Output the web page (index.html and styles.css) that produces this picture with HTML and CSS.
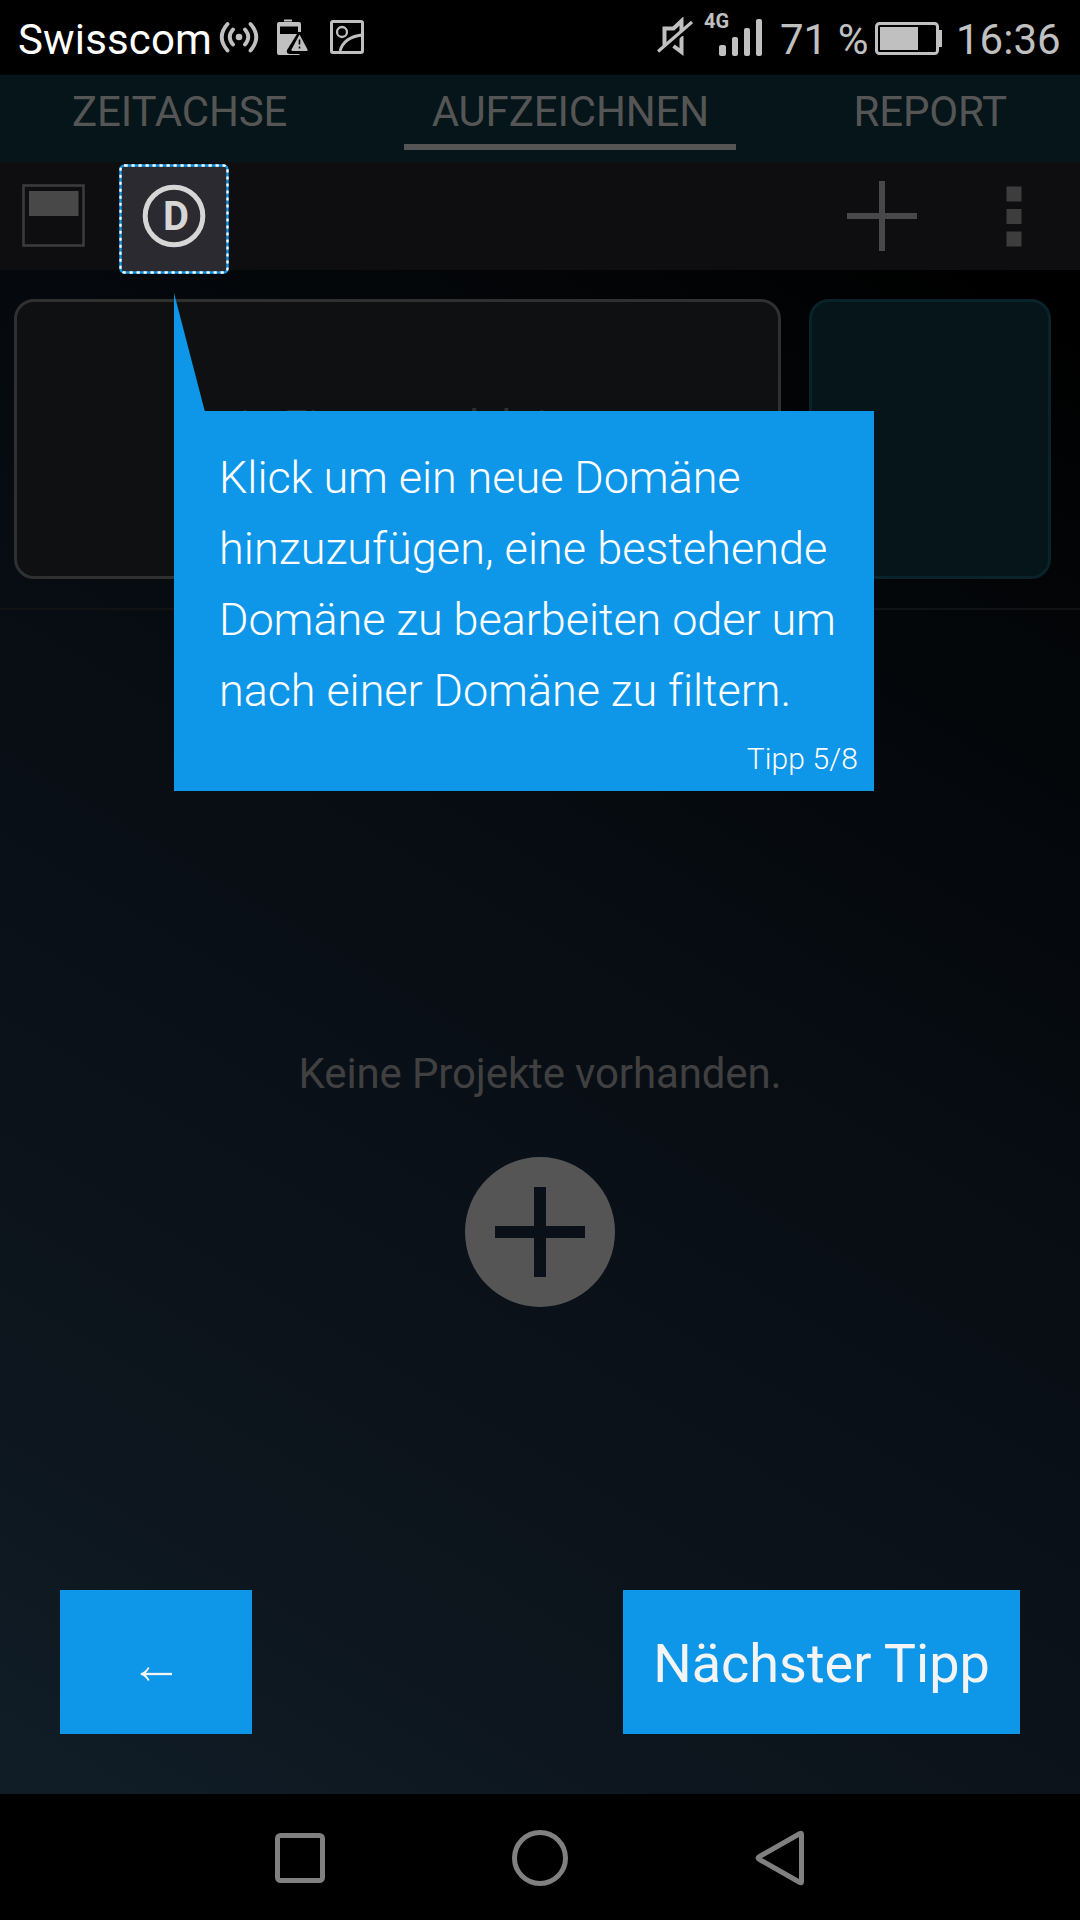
FILE: index.html
```html
<!DOCTYPE html>
<html lang="de">
<head>
<meta charset="utf-8">
<title>Aufzeichnen</title>
<link rel="stylesheet" href="styles.css">
</head>
<body>
<div class="screen">
  <header class="status">
    <span class="carrier">Swisscom</span>
    <svg class="status-left-icons" viewBox="0 0 148 75" width="148" height="75" fill="none" stroke="#c0c0c0">
      <g stroke-width="3.8" stroke-linecap="round">
        <circle cx="21" cy="37" r="3.3" fill="#c0c0c0" stroke="none"/>
        <path d="M15 29.500Q8.500 37 15 44.500M27 29.500Q33.500 37 27 44.500M9.500 24Q-2 37 9.500 50.500M32.500 24Q44 37 32.500 50.500"/>
      </g>
      <g fill="#c0c0c0" stroke="none">
        <path d="M66 19.500h8v2h-8z"/>
        <path fill-rule="evenodd" d="M61 22h20q2 0 2 2v8h-3v-5.500h-18v7.500h17L69 50q-1 4 3 4h10l-1 1H61q-2 0-2-2V24q0-2 2-2z"/>
        <path d="M81.500 34.500L73.500 49.500q-.5 1.500 1 1.500h14q1.500 0 1-1.500z"/>
      </g>
      <path d="M81.500 39.500v5M81.500 46.500v2" stroke="#000" stroke-width="1.600"/>
      <rect x="113.500" y="21.500" width="31" height="31" rx="1.500" stroke-width="3"/>
      <circle cx="124" cy="32" r="5" stroke-width="2.300"/>
      <path d="M122 51Q126 37 144 35" stroke-width="2.800"/>
    </svg>
    <svg class="mute" viewBox="0 0 36 40" width="36" height="40" fill="none" stroke="#c0c0c0">
      <path d="M24.500 14V4L16.500 11.500H7.500v17M16.500 29l8 6V19" stroke-width="4"/>
      <path d="M3 36.500L36 8" stroke="#000" stroke-width="2.500"/>
      <path d="M1 34.500L35 5" stroke-width="3.200"/>
    </svg>
    <div class="network">
      <span class="network-type">4G</span>
      <svg viewBox="0 0 44 38" width="44" height="38" fill="#c0c0c0"><rect y="26" width="7" height="11" rx="2"/><rect x="13" y="18" width="6" height="19" rx="2"/><rect x="25" y="9" width="6" height="28" rx="2"/><rect x="37" y="0" width="6" height="37" rx="2"/></svg>
    </div>
    <span class="percent">71&nbsp;%</span>
    <svg class="battery" viewBox="0 0 68 34" width="68" height="34"><rect x="1.500" y="1.500" width="61" height="30" rx="3" fill="none" stroke="#c0c0c0" stroke-width="3"/><path fill="#c0c0c0" d="M5 5h38v23H5zM64 8h3v17h-3z"/></svg>
    <span class="clock">16:36</span>
  </header>
  <nav class="tabs">
    <span class="tab tab-first">ZEITACHSE</span>
    <span class="tab tab-active">AUFZEICHNEN</span>
    <span class="tab tab-last">REPORT</span>
  </nav>
  <div class="toolbar">
    <svg class="layout-icon" viewBox="0 0 64 64" width="64" height="64"><rect x="1.500" y="1.500" width="60" height="60" fill="none" stroke="#3b3b3c" stroke-width="2.600"/><rect x="7" y="7" width="49.500" height="25" fill="#484848"/></svg>
    <div class="domain">
      <svg viewBox="0 0 110 110" width="110" height="110"><rect x="1.500" y="1.500" width="107" height="107" rx="4" fill="#2b2a30" stroke="#1097e8" stroke-width="2.300"/><rect x="1.500" y="1.500" width="107" height="107" rx="4" fill="none" stroke="#fff" stroke-width="2.300" stroke-dasharray="3.200 3.800"/><circle cx="55" cy="52" r="28.800" fill="none" stroke="#d6d6d6" stroke-width="5"/></svg>
      <span class="domain-letter">D</span>
    </div>
    <svg class="plus" viewBox="0 0 70 70" width="70" height="70"><path d="M0 35h70M35 0v70" stroke="#484848" stroke-width="6"/></svg>
    <svg class="more" viewBox="0 0 16 61" width="16" height="61" fill="#3d3d3d"><path d="M.5.500h15v15h-15zM.5 23h15v15h-15zM.5 45.500h15v15h-15z"/></svg>
  </div>
  <section class="cards">
    <div class="card card-entry">kein Eintrag selektiert</div>
    <div class="card card-timer"></div>
  </section>
  <main class="content">
    <p class="empty">Keine Projekte vorhanden.</p>
    <svg viewBox="0 0 150 150" width="150" height="150"><path fill="#555" fill-rule="evenodd" d="M75 0a75 75 0 1 1 0 150a75 75 0 1 1 0-150zM69 30v39H30v12h39v39h12V81h39V69H81V30z"/></svg>
  </main>
  <footer class="actions">
    <button class="button button-back"><svg viewBox="0 0 34 16" width="34" height="16" fill="none" stroke="#f4f4f4" stroke-width="2.300"><path d="M33 8H2"/><path fill="#f4f4f4" stroke="none" d="M1 8Q7 5 9 1l1.500 1Q8 6 6 8Q8 10 10.500 14L9 15Q7 11 1 8z"/></svg></button>
    <button class="button button-next">Nächster Tipp</button>
  </footer>
  <div class="system-nav">
    <svg viewBox="0 0 540 60" width="540" height="60" fill="none" stroke="#808080" stroke-width="5"><rect x="7.500" y="7.500" width="45" height="45" rx="3"/><circle cx="270" cy="30" r="25.500"/><path d="M530 5.500L489.500 28.500q-3 1.500 0 3L530 54.500q1.500 1 1.500-1V6.500q0-2-1.500-1z"/></svg>
  </div>
  <aside class="tip">
    <svg class="tip-pointer" viewBox="0 0 31 119" width="31" height="119"><path fill="#0e96e8" d="M0 0L31 119H0z"/></svg>
    <p class="tip-text">Klick um ein neue Domäne<br><span class="tip-line-wide">hinzuzufügen, eine bestehende</span><br>Domäne zu bearbeiten oder um<br>nach einer Domäne zu filtern.</p>
    <span class="tip-count">Tipp 5/8</span>
  </aside>
</div>
</body>
</html>
```
FILE: styles.css
```css
* { box-sizing: border-box; }
body { margin: 0; background: #000; font-family: Roboto, sans-serif; }
p { margin: 0; }
.screen {
  position: relative;
  display: flex;
  flex-direction: column;
  width: 1080px;
  height: 1920px;
  overflow: hidden;
  background: linear-gradient(211deg, #000 12%, #04070a 30%, #090f16 55%, #0c141c 75%, #101d27 95%);
}
.status {
  display: flex;
  align-items: center;
  height: 75px;
  flex: none;
  padding-left: 18px;
  background: #000;
  color: #c0c0c0;
  font-size: 42px;
  line-height: 75px;
}
.carrier { width: 200px; color: #fff; letter-spacing: .15px; padding-top: 3px; }
.status-left-icons { flex: none; }
.mute { margin-left: 291px; margin-top: -2px; flex: none; }
.network { position: relative; width: 60px; height: 75px; margin-left: 11px; padding: 19px 0 0 15px; flex: none; }
.network svg { display: block; }
.network-type { position: absolute; left: 0; top: 11px; font: bold 20px/20px Roboto, sans-serif; }
.percent { width: 95px; margin-left: 16px; padding-top: 3px; white-space: nowrap; }
.battery { flex: none; margin-top: 2px; }
.clock { margin-left: 13px; padding-top: 3px; }
.tabs {
  display: flex;
  justify-content: space-between;
  height: 87px;
  flex: none;
  padding: 0 73px 12px 72px;
  background: #061519;
  color: #555;
  font-size: 42px;
  letter-spacing: -.15px;
  line-height: 74px;
}
.tab-active { width: 332px; border-bottom: 6px solid #555; text-align: center; }
.toolbar {
  display: flex;
  align-items: center;
  height: 108px;
  flex: none;
  padding-left: 22px;
  background: #0e0e10;
}
.domain { position: relative; margin-left: 33px; margin-top: 5px; height: 110px; }
.domain svg { display: block; }
.domain-letter { position: absolute; left: 44px; top: 28px; font: bold 40px/50px Roboto, sans-serif; color: #d6d6d6; }
.plus { margin-left: 618px; }
.more { margin-left: 89px; }
.cards {
  display: flex;
  gap: 28px;
  height: 340px;
  flex: none;
  padding: 29px 28px 29px 14px;
  border-bottom: 2px solid #111214;
}
.card { border: 3px solid #303030; border-radius: 20px; }
.card-entry {
  width: 767px;
  background: #0f1011;
  color: #303030;
  font-size: 42px;
  line-height: 247px;
  text-align: center;
}
.card-timer { width: 242px; border-color: #0a222a; background: #061519; }
.content {
  display: flex;
  flex: 1;
  flex-direction: column;
  align-items: center;
  padding-top: 437px;
}
.empty { height: 110px; color: #404040; font-size: 42px; line-height: 54px; letter-spacing: -.13px; }
.actions {
  display: flex;
  justify-content: space-between;
  height: 204px;
  flex: none;
  padding: 0 60px;
}
.button {
  height: 144px;
  padding: 0;
  border: 0;
  background: #0e96e8;
  color: #f4f4f4;
  font: 54px/144px Roboto, sans-serif;
}
.button-back { width: 192px; }
.button-back svg { display: block; margin: 24px auto 0; }
.button-next { width: 397px; padding-top: 2px; }
.system-nav {
  display: flex;
  align-items: center;
  justify-content: center;
  height: 126px;
  flex: none;
  padding-top: 2px;
  background: #000;
}
.tip {
  position: absolute;
  left: 174px;
  top: 411px;
  width: 700px;
  height: 380px;
  padding: 31px 0 0 45px;
  background: #0e96e8;
  color: #fff;
}
.tip-pointer { position: absolute; left: 0; top: -118px; }
.tip-text { font-size: 45px; font-weight: 300; line-height: 71px; letter-spacing: -.07px; white-space: nowrap; }
.tip-line-wide { letter-spacing: .04px; }
.tip-count { position: absolute; right: 16px; bottom: 12px; font-size: 30px; line-height: 40px; font-weight: 300; letter-spacing: .1px; }
```
